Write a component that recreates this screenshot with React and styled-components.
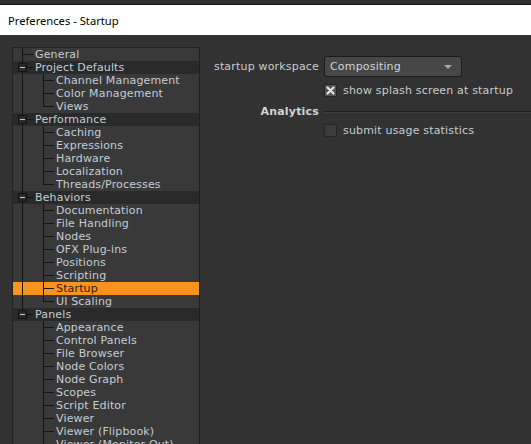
import React from "react";
import styled, { createGlobalStyle } from "styled-components";

const GlobalStyle = createGlobalStyle`
  html, body {
    margin: 0;
    padding: 0;
    background: #323232;
  }
  body {
    font-family: "DejaVu Sans", sans-serif;
  }
`;

const Window = styled.div`
  width: 531px;
  height: 444px;
  overflow: hidden;
  display: flex;
  flex-direction: column;
  background: #323232;
`;

const TopStrip = styled.div`
  height: 4px;
  background: #2f2f2f;
  border-bottom: 1px solid #161616;
  flex: 0 0 auto;
`;

const TitleBar = styled.div`
  height: 30px;
  flex: 0 0 auto;
  background: #ffffff;
  display: flex;
  align-items: center;
  padding-left: 8px;
  font-family: "Noto Sans", sans-serif;
  font-size: 11.2px;
  color: #000;
`;

const Body = styled.div`
  flex: 1;
  display: flex;
  align-items: flex-start;
  min-height: 0;
`;

const TreePanel = styled.div`
  margin: 12px 0 0 12px;
  width: 188px;
  height: 420px;
  box-sizing: border-box;
  flex: 0 0 auto;
  background: #393939;
  border: 1px solid #232323;
  border-right-color: #1f1f1f;
  overflow: hidden;
`;

const Row = styled.div`
  height: 13px;
  display: flex;
  align-items: stretch;
  padding-left: 9px;
  font-size: 11px;
  line-height: 13px;
  letter-spacing: 0.15px;
  white-space: nowrap;
  color: ${(p) => (p.$selected ? "#2a1f12" : "#c3cdd7")};
  background: ${(p) =>
    p.$selected ? "#f7931e" : p.$group ? "#2a2a2a" : "transparent"};
`;

const RootLane = styled.div`
  width: 21px;
  flex: 0 0 auto;
  box-sizing: border-box;
  border-left: 1px solid ${(p) => (p.$line ? "#141414" : "transparent")};
`;

const Connector = styled.div`
  position: relative;
  width: 11px;
  flex: 0 0 auto;
  display: flex;
  flex-direction: column;
`;

const Elbow = styled.div`
  height: 7px;
  box-sizing: border-box;
  border-left: 1px solid #141414;
  border-bottom: 1px solid #141414;
`;

const Tail = styled.div`
  flex: 1;
  border-left: 1px solid ${(p) => (p.$last ? "transparent" : "#141414")};
`;

const Collapse = styled.div`
  position: absolute;
  left: -4px;
  top: 2px;
  width: 9px;
  height: 9px;
  box-sizing: border-box;
  background: #2a2a2a;
  border: 1px solid #121212;
  display: flex;
  align-items: center;
  justify-content: center;
  &::after {
    content: "";
    width: 5px;
    height: 1px;
    background: #c8c8c8;
  }
`;

const Label = styled.span`
  margin-left: 2px;
`;

const Form = styled.div`
  flex: 1;
  margin-top: 21px;
  display: grid;
  grid-template-columns: 119px 1fr;
  grid-template-rows: 21px 27px 14px 25px;
  column-gap: 5px;
  align-items: center;
  font-size: 11px;
  letter-spacing: 0.18px;
  color: #c8ccd0;
`;

const FieldLabel = styled.div`
  text-align: right;
  white-space: nowrap;
  font-weight: ${(p) => (p.$bold ? "bold" : "normal")};
  color: ${(p) => (p.$bold ? "#d4d4d4" : "#c8ccd0")};
`;

const Select = styled.div`
  width: 138px;
  height: 21px;
  box-sizing: border-box;
  border: 1px solid #1c1c1c;
  border-radius: 3px;
  background: #474747;
  display: flex;
  align-items: center;
  justify-content: space-between;
  padding: 0 9px 0 5px;
  font-size: 11px;
  color: #d2d6da;
`;

const Arrow = styled.div`
  width: 0;
  height: 0;
  border-left: 4px solid transparent;
  border-right: 4px solid transparent;
  border-top: 4px solid #a8a8a8;
`;

const CheckRow = styled.div`
  display: flex;
  align-items: center;
  gap: 6px;
  white-space: nowrap;
  color: #c8ccd0;
`;

const Box = styled.div`
  width: 13px;
  height: 13px;
  box-sizing: border-box;
  border: 1px solid #262626;
  background: ${(p) => (p.$checked ? "#545454" : "#3c3c3c")};
  display: flex;
  align-items: center;
  justify-content: center;
`;

const Rule = styled.div`
  height: 1px;
  background: #1f1f1f;
  box-shadow: 0 1px 0 #3e3e3e;
`;

const tree = [
  { label: "General" },
  {
    label: "Project Defaults",
    children: ["Channel Management", "Color Management", "Views"],
  },
  {
    label: "Performance",
    children: [
      "Caching",
      "Expressions",
      "Hardware",
      "Localization",
      "Threads/Processes",
    ],
  },
  {
    label: "Behaviors",
    children: [
      "Documentation",
      "File Handling",
      "Nodes",
      "OFX Plug-ins",
      "Positions",
      "Scripting",
      "Startup",
      "UI Scaling",
    ],
  },
  {
    label: "Panels",
    children: [
      "Appearance",
      "Control Panels",
      "File Browser",
      "Node Colors",
      "Node Graph",
      "Scopes",
      "Script Editor",
      "Viewer",
      "Viewer (Flipbook)",
      "Viewer (Monitor Out)",
      "Viewer Handles",
    ],
  },
];

const selected = "Startup";

function Tree() {
  return (
    <TreePanel>
      {tree.map((node, i) => {
        const lastTop = i === tree.length - 1;
        const group = !!node.children;
        return (
          <React.Fragment key={node.label}>
            <Row $group={group}>
              <Connector>
                <Elbow />
                <Tail $last={lastTop} />
                {group && <Collapse />}
              </Connector>
              <Label>{node.label}</Label>
            </Row>
            {group &&
              node.children.map((child, j) => (
                <Row key={child} $selected={child === selected}>
                  <RootLane $line={!lastTop} />
                  <Connector>
                    <Elbow />
                    <Tail $last={j === node.children.length - 1} />
                  </Connector>
                  <Label>{child}</Label>
                </Row>
              ))}
          </React.Fragment>
        );
      })}
    </TreePanel>
  );
}

function Cross() {
  return (
    <svg width="9" height="9" viewBox="0 0 9 9">
      <path
        d="M1.5 1.5 L7.5 7.5 M7.5 1.5 L1.5 7.5"
        stroke="#e4e4e4"
        strokeWidth="2.2"
        strokeLinecap="round"
      />
    </svg>
  );
}

export default function App() {
  return (
    <>
      <GlobalStyle />
      <Window>
        <TopStrip />
        <TitleBar>Preferences - Startup</TitleBar>
        <Body>
          <Tree />
          <Form>
            <FieldLabel>startup workspace</FieldLabel>
            <Select>
              <span>Compositing</span>
              <Arrow />
            </Select>
            <div />
            <CheckRow>
              <Box $checked>
                <Cross />
              </Box>
              show splash screen at startup
            </CheckRow>
            <FieldLabel $bold>Analytics</FieldLabel>
            <Rule />
            <div />
            <CheckRow>
              <Box />
              submit usage statistics
            </CheckRow>
          </Form>
        </Body>
      </Window>
    </>
  );
}
